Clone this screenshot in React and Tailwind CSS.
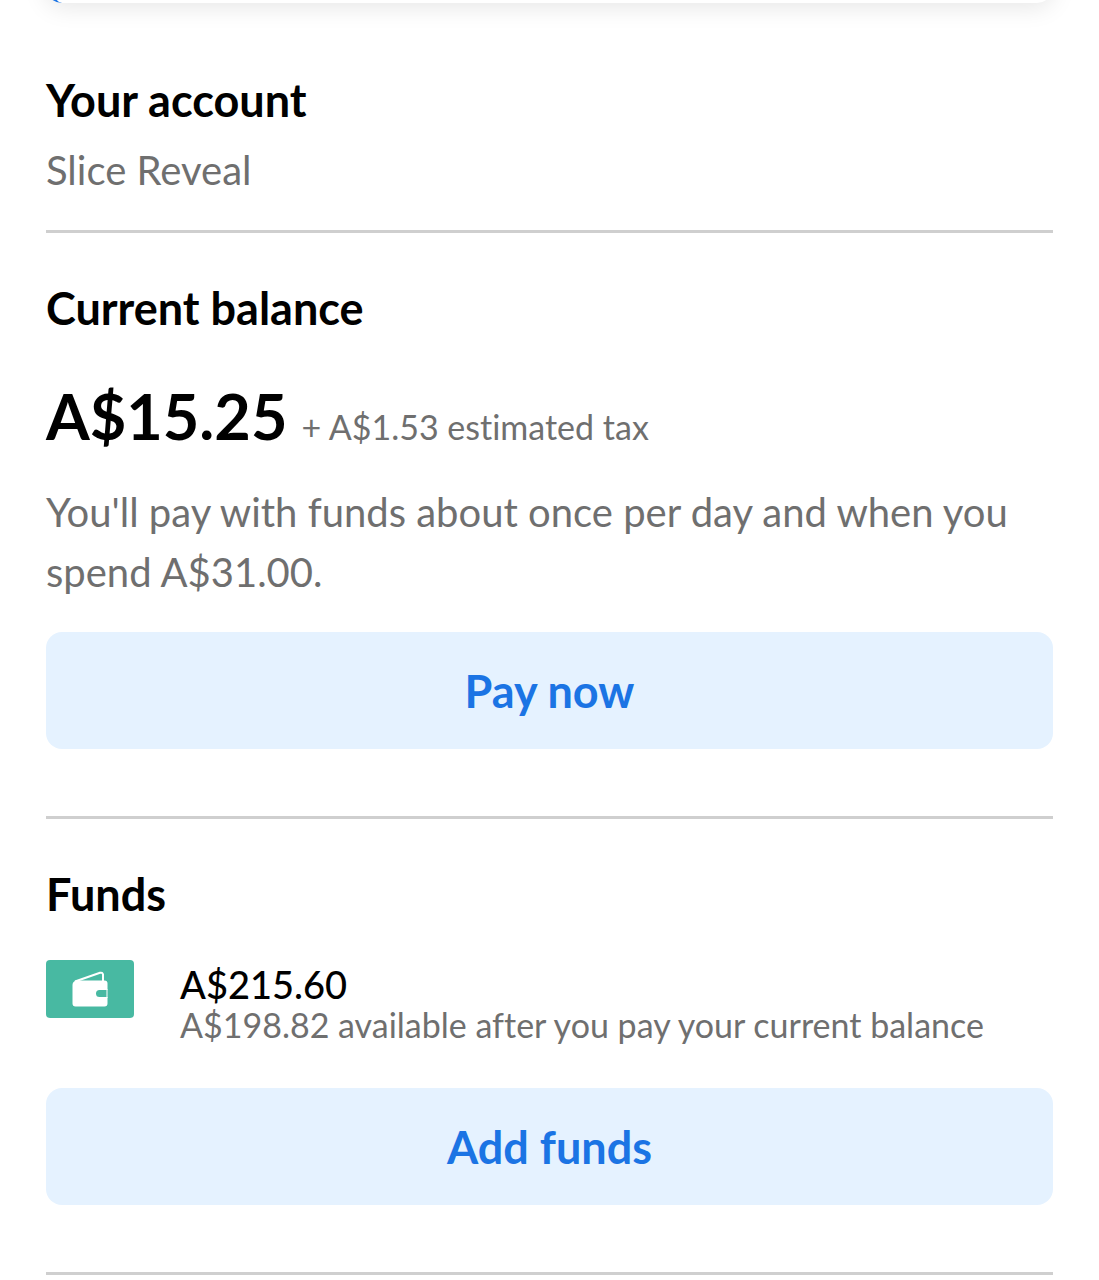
import React from "react";

const account = {
    name: "Slice Reveal",
    balance: "A$15.25",
    tax: "A$1.53",
    threshold: "A$31.00",
    funds: "A$215.60",
    available: "A$198.82",
};

function WalletIcon() {
    return (
        <svg viewBox="0 0 88 58" className="w-[88px] h-[58px] shrink-0" aria-hidden="true">
            <rect width="88" height="58" rx="4" fill="#48b9a2" />
            <path d="M29 21.5 L54 12.8 Q56.5 12.2 57 14.5 V22" fill="none" stroke="#fff" strokeWidth="2" />
            <path
                d="M26.5 25 Q26.5 21.5 30 20.5 L35 20.5 H58.5 Q61.5 20.5 61.5 23.5 V30 H53.5 Q50 30 50 33.5 Q50 37 53.5 37 H61.5 V43.5 Q61.5 46.5 58.5 46.5 H29.5 Q26.5 46.5 26.5 43.5 Z"
                fill="#fff"
            />
            <path d="M60.5 29 H61.5 V38 H60.5 Z" fill="#fff" />
        </svg>
    );
}

function SectionTitle({ children }) {
    return <h2 className="text-[45px] leading-[60px] font-bold text-black">{children}</h2>;
}

function ActionButton({ children }) {
    return (
        <button
            type="button"
            className="w-full h-[117px] rounded-2xl bg-[#e5f2ff] text-[#1b74e4] text-[45px] leading-[60px] font-bold"
        >
            {children}
        </button>
    );
}

export default function App() {
    return (
        <main className="min-h-screen overflow-hidden bg-white px-[46px] font-['Lato',sans-serif] text-[#6f6f6f] [font-variant-ligatures:none]">
            {/* Bottom edge of the card scrolled past the top */}
            <div className="h-16 -mt-[61px] rounded-2xl border-l-[7px] border-[#1b74e4] bg-white shadow-[0_4px_24px_rgba(0,0,0,0.1)]" />

            <section className="pt-[67px] pb-[30px] border-b-3 border-[#cfcfcf]">
                <SectionTitle>Your account</SectionTitle>
                <p className="mt-[10px] text-[40px] leading-[60px]">{account.name}</p>
            </section>

            <section className="pt-[45px] pb-[67px] border-b-3 border-[#cfcfcf]">
                <SectionTitle>Current balance</SectionTitle>
                <p className="mt-[38px] flex items-baseline gap-[14px]">
                    <strong className="text-[63px] leading-[80px] font-bold text-black">{account.balance}</strong>
                    <span className="text-[34px]">{`+ ${account.tax} estimated tax`}</span>
                </p>
                <p className="mt-[26px] mb-[30px] text-[40px] leading-[60px]">
                    {`You'll pay with funds about once per day and when you spend ${account.threshold}.`}
                </p>
                <ActionButton>Pay now</ActionButton>
            </section>

            <section className="pt-[45px] pb-[67px] border-b-3 border-[#cfcfcf]">
                <SectionTitle>Funds</SectionTitle>
                <div className="mt-[36px] mb-[46px] flex gap-[46px]">
                    <WalletIcon />
                    <div>
                        <p className="text-[38px] leading-[48px] text-black font-medium">{account.funds}</p>
                        <p className="text-[34px] leading-[34px]">
                            {`${account.available} available after you pay your current balance`}
                        </p>
                    </div>
                </div>
                <ActionButton>Add funds</ActionButton>
            </section>
        </main>
    );
}
